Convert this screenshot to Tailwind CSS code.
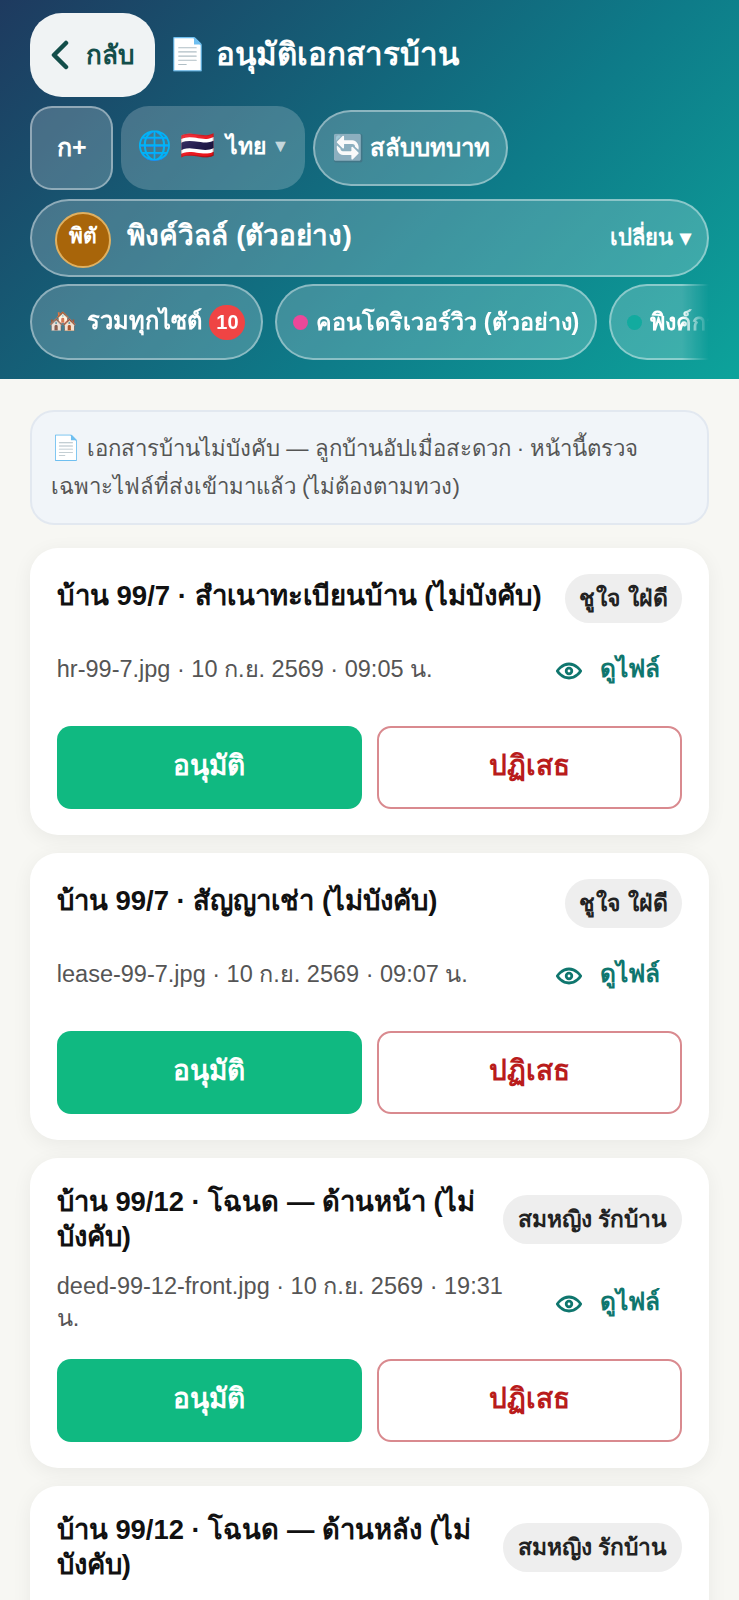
<!DOCTYPE html>
<html lang="th">
<head>
    <meta charset="UTF-8">
    <meta name="viewport" content="width=device-width, initial-scale=1.0">
    <title>อนุมัติเอกสารบ้าน</title>
    <script src="https://cdn.jsdelivr.net/npm/@tailwindcss/browser@4"></script>
</head>
<body class="bg-[#f7f7f3] font-['Liberation_Sans','Noto_Sans',sans-serif] text-[#111]">
<div class="h-[1600px] overflow-hidden">
    <!-- header -->
    <header class="h-[379px] bg-[linear-gradient(135deg,#1e3a5f,#0e7a88_60%,#0da39b)] px-[30.4px] pt-[13px]">
        <div class="flex items-center gap-[13px]">
            <button class="flex h-[84px] w-[125px] items-center justify-center gap-[16px] rounded-[32px] bg-[#f0f3f4] text-[26px] font-semibold text-[#134e4a]">
                <svg width="20" height="30" viewBox="0 0 20 30" fill="none" stroke="#134e4a" stroke-width="4.5" stroke-linecap="round" stroke-linejoin="round"><path d="M16 3 L4 15 L16 27"/></svg>
                <span>กลับ</span>
            </button>
            <h1 class="text-[31.3px] font-bold text-white">📄 อนุมัติเอกสารบ้าน</h1>
        </div>
        <div class="mt-[9px] flex items-center gap-[8px]">
            <div class="flex h-[84px] w-[83px] items-center justify-center rounded-[22px] border-2 border-white/40 bg-white/20 text-[25px] font-bold text-white">ก+</div>
            <div class="flex h-[84px] w-[184px] items-start justify-center gap-[8px] rounded-[28px] bg-white/20 pt-[22px] text-[23px] font-bold text-white"><span class="text-[28px] leading-[36px]">🌐</span><span class="text-[28px] leading-[36px]">🇹🇭</span><span class="ml-[3px] leading-[36px]">ไทย</span><span class="-ml-[3px] text-[18px] leading-[36px] text-white/70">▼</span></div>
            <div class="flex h-[76px] w-[195px] items-center justify-center gap-[6px] rounded-full border-2 border-white/40 bg-white/20 text-[24px] font-bold text-white"><span class="text-[26px]">🔄</span><span>สลับบทบาท</span></div>
        </div>
        <div class="mt-[9px] flex h-[78px] items-center justify-between rounded-full border-2 border-white/40 bg-white/20 pl-[23px] pr-[16px] text-white">
            <div class="flex items-center gap-[16px]">
                <div class="mt-[3px] flex h-[56px] w-[56px] items-center justify-center rounded-full border-2 border-[#e0b060] bg-[#a8650a] pb-[8px] text-[21px] font-bold">พิตั</div>
                <span class="mb-[4px] text-[28px] font-bold">พิงค์วิลล์ (ตัวอย่าง)</span>
            </div>
            <span class="mb-[2px] text-[22px] font-semibold">เปลี่ยน ▾</span>
        </div>
        <div class="mt-[7px] flex gap-[12px] overflow-hidden [mask-image:linear-gradient(90deg,#000_96%,transparent)]">
            <div class="flex h-[76px] shrink-0 items-center gap-[7px] rounded-full border-2 border-white/40 bg-white/20 px-[16px] text-[23.7px] font-bold text-white"><span>🏘️</span><span class="ml-[3px]">รวมทุกไซต์</span><span class="flex h-[35px] w-[36px] items-center justify-center rounded-full bg-[#ef4444] text-[20px]">10</span></div>
            <div class="flex h-[76px] shrink-0 items-center gap-[8px] rounded-full border-2 border-white/40 bg-white/20 px-[16px] text-[23.3px] font-bold text-white"><span class="h-[15px] w-[15px] rounded-full bg-[#ec4899]"></span>คอนโดริเวอร์วิว (ตัวอย่าง)</div>
            <div class="flex h-[76px] shrink-0 items-center gap-[8px] rounded-full border-2 border-white/40 bg-white/20 px-[16px] text-[23.3px] font-bold text-white"><span class="h-[15px] w-[15px] rounded-full bg-[#12ab9f]"></span>พิงค์การ์เด้น</div>
        </div>
    </header>

    <main class="px-[30.4px] pt-[31px]">
        <div class="rounded-[24px] border-2 border-[#e2e8f0] bg-[#f1f5f9] px-[18.5px] py-[17px] text-[22.2px] leading-[38px] text-[#555]"><span class="text-[24px]">📄</span> เอกสารบ้านไม่บังคับ — ลูกบ้านอัปเมื่อสะดวก · หน้านี้ตรวจเฉพาะไฟล์ที่ส่งเข้ามาแล้ว (ไม่ต้องตามทวง)</div>

        <div class="mt-[23px] flex flex-col gap-[18px]">
            <!-- card -->
            <section class="rounded-[28px] bg-white px-[26.4px] pb-[26px] pt-[26px] shadow-[0_4px_20px_rgba(0,0,0,0.06)]">
                <div class="flex items-center justify-between gap-[8px]">
                    <h2 class="mb-[6px] whitespace-nowrap text-[27.6px] font-bold leading-[35px]">บ้าน 99/7 · สำเนาทะเบียนบ้าน (ไม่บังคับ)</h2>
                    <span class="shrink-0 rounded-full bg-[#eeeeee] px-[14px] text-[23px] font-semibold leading-[49px] tracking-[0.5px] text-[#222]">ชูใจ ใฝ่ดี</span>
                </div>
                <div class="mt-[13px] flex h-[66px] items-center justify-between gap-[12px]">
                    <p class="text-[23.5px] leading-[32px] text-[#555]">hr-99-7.jpg · 10 ก.ย. 2569 · 09:05 น.</p>
                    <a class="flex w-[146px] shrink-0 items-center gap-[17px] pl-[19px] text-[24.5px] font-semibold text-[#0f766e]">
                        <svg class="mt-[4px]" width="28" height="28" viewBox="0 0 24 24" fill="none" stroke="#0f766e" stroke-width="2.4" stroke-linecap="round" stroke-linejoin="round"><path d="M2 12s3.6-6 10-6 10 6 10 6-3.6 6-10 6-10-6-10-6Z"/><circle cx="12" cy="12" r="2.4"/></svg>
                        <span>ดูไฟล์</span>
                    </a>
                </div>
                <div class="mt-[24px] grid grid-cols-2 gap-[15px]">
                    <button class="h-[83px] rounded-[14px] bg-[#10b981] pb-[4px] text-[28px] font-bold text-white">อนุมัติ</button>
                    <button class="h-[83px] rounded-[14px] border-2 border-[#d98a8f] bg-white pb-[4px] text-[28px] font-bold text-[#b91c1c]">ปฏิเสธ</button>
                </div>
            </section>

            <section class="rounded-[28px] bg-white px-[26.4px] pb-[26px] pt-[26px] shadow-[0_4px_20px_rgba(0,0,0,0.06)]">
                <div class="flex items-center justify-between gap-[8px]">
                    <h2 class="mb-[6px] whitespace-nowrap text-[27.5px] font-bold leading-[35px]">บ้าน 99/7 · สัญญาเช่า (ไม่บังคับ)</h2>
                    <span class="shrink-0 rounded-full bg-[#eeeeee] px-[14px] text-[23px] font-semibold leading-[49px] tracking-[0.5px] text-[#222]">ชูใจ ใฝ่ดี</span>
                </div>
                <div class="mt-[13px] flex h-[66px] items-center justify-between gap-[12px]">
                    <p class="text-[23.5px] leading-[32px] text-[#555]">lease-99-7.jpg · 10 ก.ย. 2569 · 09:07 น.</p>
                    <a class="flex w-[146px] shrink-0 items-center gap-[17px] pl-[19px] text-[24.5px] font-semibold text-[#0f766e]">
                        <svg class="mt-[4px]" width="28" height="28" viewBox="0 0 24 24" fill="none" stroke="#0f766e" stroke-width="2.4" stroke-linecap="round" stroke-linejoin="round"><path d="M2 12s3.6-6 10-6 10 6 10 6-3.6 6-10 6-10-6-10-6Z"/><circle cx="12" cy="12" r="2.4"/></svg>
                        <span>ดูไฟล์</span>
                    </a>
                </div>
                <div class="mt-[24px] grid grid-cols-2 gap-[15px]">
                    <button class="h-[83px] rounded-[14px] bg-[#10b981] pb-[4px] text-[28px] font-bold text-white">อนุมัติ</button>
                    <button class="h-[83px] rounded-[14px] border-2 border-[#d98a8f] bg-white pb-[4px] text-[28px] font-bold text-[#b91c1c]">ปฏิเสธ</button>
                </div>
            </section>

            <section class="rounded-[28px] bg-white px-[26.4px] pb-[26px] pt-[26px] shadow-[0_4px_20px_rgba(0,0,0,0.06)]">
                <div class="flex items-center justify-between gap-[16px]">
                    <h2 class="text-[27.4px] font-bold leading-[35px]">บ้าน 99/12 · โฉนด — ด้านหน้า (ไม่บังคับ)</h2>
                    <span class="shrink-0 rounded-full bg-[#eeeeee] px-[15px] text-[22.8px] font-semibold leading-[49px] text-[#222]">สมหญิง รักบ้าน</span>
                </div>
                <div class="mt-[15px] flex h-[66px] items-center justify-between gap-[12px]">
                    <p class="text-[23.5px] leading-[32px] text-[#555]">deed-99-12-front.jpg · 10 ก.ย. 2569 · 19:31 น.</p>
                    <a class="flex w-[146px] shrink-0 items-center gap-[17px] pl-[19px] text-[24.5px] font-semibold text-[#0f766e]">
                        <svg class="mt-[4px]" width="28" height="28" viewBox="0 0 24 24" fill="none" stroke="#0f766e" stroke-width="2.4" stroke-linecap="round" stroke-linejoin="round"><path d="M2 12s3.6-6 10-6 10 6 10 6-3.6 6-10 6-10-6-10-6Z"/><circle cx="12" cy="12" r="2.4"/></svg>
                        <span>ดูไฟล์</span>
                    </a>
                </div>
                <div class="mt-[24px] grid grid-cols-2 gap-[15px]">
                    <button class="h-[83px] rounded-[14px] bg-[#10b981] pb-[4px] text-[28px] font-bold text-white">อนุมัติ</button>
                    <button class="h-[83px] rounded-[14px] border-2 border-[#d98a8f] bg-white pb-[4px] text-[28px] font-bold text-[#b91c1c]">ปฏิเสธ</button>
                </div>
            </section>

            <section class="h-[200px] rounded-[28px] bg-white px-[26.4px] pt-[26px] shadow-[0_4px_20px_rgba(0,0,0,0.06)]">
                <div class="flex items-center justify-between gap-[16px]">
                    <h2 class="text-[27.4px] font-bold leading-[35px]">บ้าน 99/12 · โฉนด — ด้านหลัง (ไม่บังคับ)</h2>
                    <span class="shrink-0 rounded-full bg-[#eeeeee] px-[15px] text-[22.8px] font-semibold leading-[49px] text-[#222]">สมหญิง รักบ้าน</span>
                </div>
            </section>
        </div>
    </main>
</div>
</body>
</html>
